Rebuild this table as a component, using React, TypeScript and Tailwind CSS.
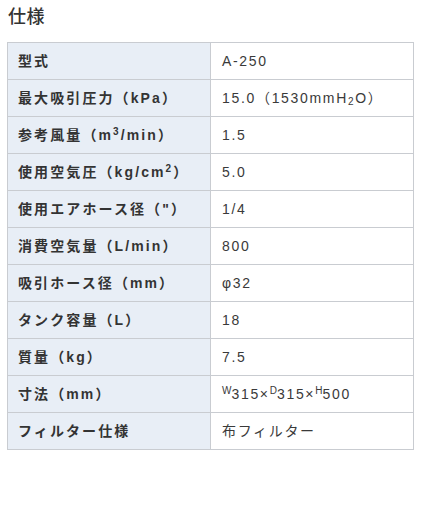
import React from 'react';

const rows: { label: React.ReactNode; value: React.ReactNode }[] = [
  { label: '型式', value: 'A-250' },
  {
    label: '最大吸引圧力（kPa）',
    value: (
      <>
        15.0（1530mmH<sub className="text-[10px]">2</sub>O）
      </>
    ),
  },
  {
    label: (
      <>
        参考風量（m<sup className="text-[10px]">3</sup>/min）
      </>
    ),
    value: '1.5',
  },
  {
    label: (
      <>
        使用空気圧（kg/cm<sup className="text-[10px]">2</sup>）
      </>
    ),
    value: '5.0',
  },
  { label: '使用エアホース径（"）', value: '1/4' },
  { label: '消費空気量（L/min）', value: '800' },
  { label: '吸引ホース径（mm）', value: 'φ32' },
  { label: 'タンク容量（L）', value: '18' },
  { label: '質量（kg）', value: '7.5' },
  {
    label: '寸法（mm）',
    value: (
      <>
        <sup className="text-[10px] tracking-normal">W</sup>315×<sup className="text-[10px] tracking-normal">D</sup>315×
        <sup className="text-[10px] tracking-normal">H</sup>500
      </>
    ),
  },
  { label: 'フィルター仕様', value: '布フィルター' },
];

export default function App() {
  return (
    <div className="w-[433px] h-[509px] bg-white text-[#333] font-['Liberation_Sans','Noto_Sans_CJK_JP',sans-serif]">
      <h2 className="pl-2 pt-[7px] text-[18px] font-medium leading-[20px] tracking-[0.03em]">仕様</h2>
      <table className="ml-[7px] mt-[15px] w-[407px] border-collapse border border-[#c9ccd1] text-[14px]">
        <tbody>
          {rows.map((row, i) => (
            <tr key={i} className="h-[37px]">
              <th className="w-[203px] border border-[#c9ccd1] bg-[#e8eef6] pl-[10px] text-left font-bold tracking-[0.15em] align-middle">
                {row.label}
              </th>
              <td className="border border-[#c9ccd1] pl-[11px] text-[#3a3a3a] tracking-[0.12em] align-middle">
                {row.value}
              </td>
            </tr>
          ))}
        </tbody>
      </table>
    </div>
  );
}
